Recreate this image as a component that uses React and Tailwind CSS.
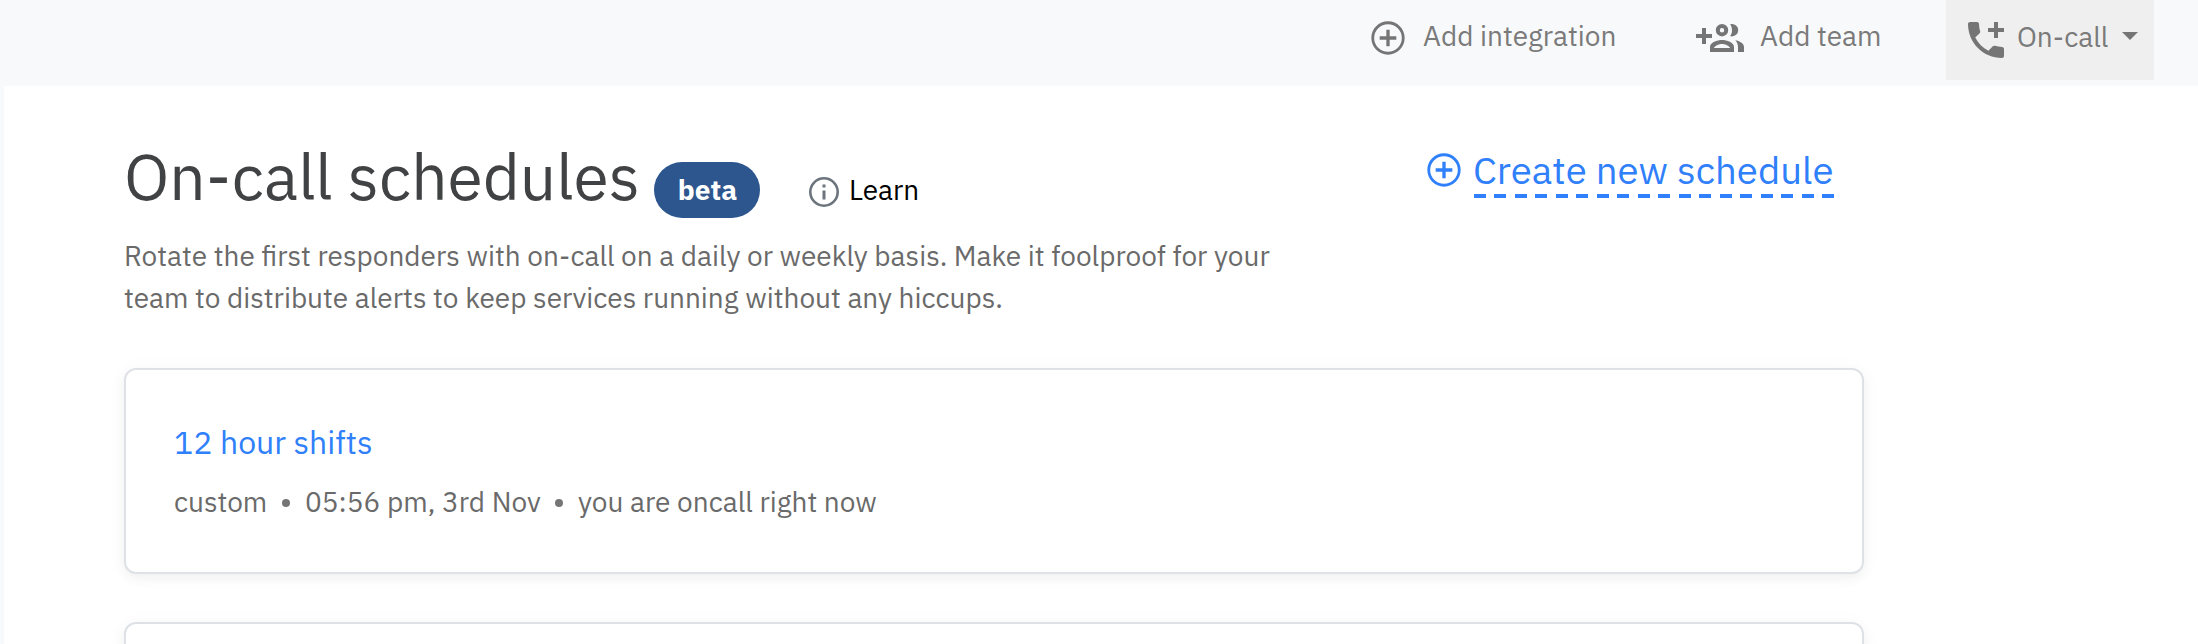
import React from "react";

function CirclePlus({ className }) {
  return (
    <svg viewBox="0 0 24 24" fill="currentColor" className={className}>
      <path d="M13 7h-2v4H7v2h4v4h2v-4h4v-2h-4V7zm-1-5C6.48 2 2 6.48 2 12s4.48 10 10 10 10-4.48 10-10S17.52 2 12 2zm0 18.3a8.3 8.3 0 1 1 0-16.6 8.3 8.3 0 0 1 0 16.6z" />
    </svg>
  );
}

function GroupAdd({ className }) {
  return (
    <svg viewBox="0 0 24 24" fill="currentColor" className={className}>
      <path d="M8 10H5V7H3v3H0v2h3v3h2v-3h3z" />
      <path
        fillRule="evenodd"
        d="M13 5a3.1 3.1 0 1 0 0 6.2A3.1 3.1 0 0 0 13 5zm0 2a1.1 1.1 0 1 1 0 2.2A1.1 1.1 0 0 1 13 7z"
      />
      <path
        fillRule="evenodd"
        d="M13 13c-2.4 0-6 1.1-6 3.5V19h12v-2.5C19 14.1 15.4 13 13 13zm-4 4c.2-.8 2-2 4-2s3.8 1.2 4 2z"
      />
      <path d="M18 11.2a3.1 3.1 0 0 0 0-6.2c-.32 0-.63.05-.91.14.57.81.9 1.85.9 2.96s-.34 2.14-.9 2.96c.28.09.59.14.91.14z" />
      <path d="M19.62 13.16c.83.83 1.38 1.9 1.38 3.34V19h3v-2.5c0-1.9-2.37-3-4.38-3.34z" />
    </svg>
  );
}

function PhonePlus({ className }) {
  return (
    <svg viewBox="0 0 24 24" fill="currentColor" className={className}>
      <path d="M20 15.5c-1.25 0-2.45-.2-3.57-.57-.35-.11-.74-.03-1.02.24l-2.2 2.2c-2.83-1.44-5.15-3.75-6.59-6.59l2.2-2.21c.28-.26.36-.65.25-1C8.7 6.45 8.5 5.25 8.5 4c0-.55-.45-1-1-1H4c-.55 0-1 .45-1 1 0 9.39 7.61 17 17 17 .55 0 1-.45 1-1v-3.5c0-.55-.45-1-1-1zM21 6h-3V3h-2v3h-3v2h3v3h2V8h3V6z" />
    </svg>
  );
}

function Info({ className }) {
  return (
    <svg viewBox="0 0 36 36" fill="none" className={className}>
      <circle cx="18" cy="18" r="13.7" stroke="currentColor" strokeWidth="2.6" />
      <path d="M16.5 10.5h3v3h-3zM16.5 16.5h3v9h-3z" fill="currentColor" />
    </svg>
  );
}

function Card({ children }) {
  return (
    <div className="h-[206px] rounded-xl border-2 border-[#dee2e6] bg-white px-12 pt-[52px] shadow-[0_4px_12px_rgba(0,0,0,0.05),0_2px_28px_rgba(0,0,0,0.025)]">
      {children}
    </div>
  );
}

function Dot() {
  return <span className="mt-px size-2 shrink-0 rounded-full bg-[#757575]" />;
}

export default function App() {
  return (
    <div className="h-[644px] w-[2198px] overflow-hidden bg-[#f8f9fb] font-['IBM_Plex_Sans',Roboto,sans-serif] text-[28px] whitespace-nowrap">
      <header className="flex h-[86px] items-start justify-end pr-11 text-[#7a7a7a]">
        <div className="flex h-[76px] items-center">
          <CirclePlus className="size-10 text-[#757575]" />
          <span className="ml-[15px] w-[194px] pb-1 leading-10">Add integration</span>
        </div>
        <div className="ml-[79px] flex h-[76px] items-center">
          <GroupAdd className="size-12 text-[#757575]" />
          <span className="ml-4 w-[123px] pb-1 leading-10">Add team</span>
        </div>
        <div className="ml-[63px] flex h-20 w-52 items-center bg-[#efefef] px-4">
          <PhonePlus className="size-12 shrink-0 text-[#757575]" />
          <span className="ml-[7px] pb-1.5 leading-10">On-call</span>
          <svg viewBox="0 0 16 8" className="mb-2 ml-auto h-2 w-4 text-[#757575]">
            <path d="M0 0h16L8 8z" fill="currentColor" />
          </svg>
        </div>
      </header>

      <main className="ml-1 h-[558px] bg-white pt-[58px] pl-[120px]">
        <div className="flex w-[1740px] items-start justify-between pr-[30px]">
          <div>
            <div className="flex h-[74px] items-start">
              <h1 className="w-[530px] text-[64px] leading-[64px] text-[#414243]">On-call schedules</h1>
              <span className="mt-[18px] flex h-14 w-[106px] items-center justify-center rounded-full bg-[#2c568d] pl-px leading-[42px] font-bold text-white">
                beta
              </span>
              <div className="mt-[30px] ml-[46px] flex h-9 items-center text-black">
                <Info className="size-9 text-[#6c757d]" />
                <span className="ml-[7px] pb-1 leading-8">Learn</span>
              </div>
            </div>
            <p className="mt-[17px] w-[1160px] leading-[42px] whitespace-normal text-[#6a6a6a]">
              Rotate the first responders with on-call on a daily or weekly basis. Make it foolproof for your team to
              distribute alerts to keep services running without any hiccups.
            </p>
          </div>
          <a className="mt-[6px] flex items-start text-[#2f80fa]">
            <CirclePlus className="size-10" />
            <span className="ml-[10px] w-[360px]">
              <span className="-ml-px block text-[38.4px] leading-10">Create new schedule</span>
              <span className="mt-1 block h-1 bg-[repeating-linear-gradient(90deg,#2f80fa_0_12px,transparent_12px_20.47px)]" />
            </span>
          </a>
        </div>

        <div className="mt-[49px] flex w-[1740px] flex-col gap-12">
          <Card>
            <h2 className="text-[32px] leading-10 text-[#2f80fa]">12 hour shifts</h2>
            <div className="mt-5 flex h-10 items-center leading-10 text-[#6a6a6a]">
              <span className="w-[108px]">custom</span>
              <Dot />
              <span className="ml-[15px] w-[250px]">05:56 pm, 3rd Nov</span>
              <Dot />
              <span className="ml-[15px]">you are oncall right now</span>
            </div>
          </Card>
          <Card />
        </div>
      </main>
    </div>
  );
}
